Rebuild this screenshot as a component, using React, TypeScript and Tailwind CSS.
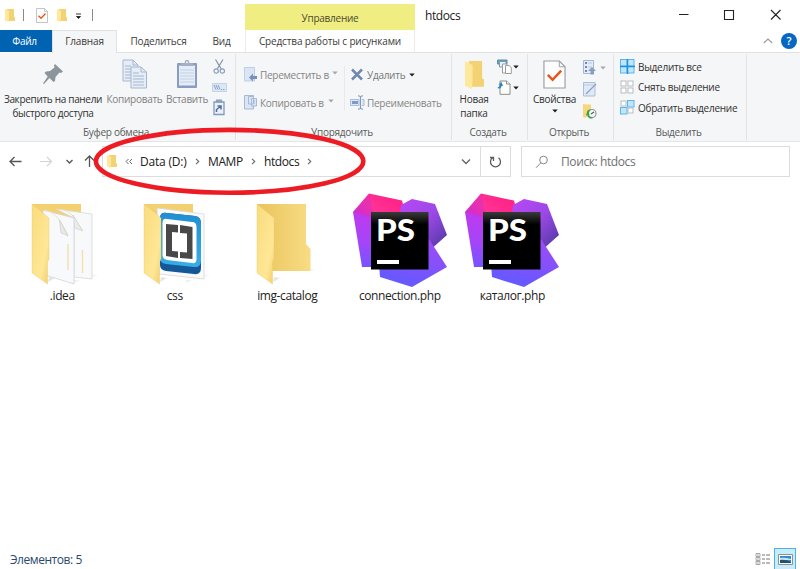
import React from "react";

const sans = "font-['Open_Sans','Noto_Sans',sans-serif]";

function Caret({ dim = false }: { dim?: boolean }) {
  return (
    <svg width="6" height="4" viewBox="0 0 6 4" className="shrink-0">
      <path d="M0.3 .5H5.7L3 3.4Z" fill={dim ? "#a4a8ac" : "#1d1d1d"} />
    </svg>
  );
}

function MiniFolder({ className }: { className: string }) {
  return (
    <svg viewBox="0 0 10 13" preserveAspectRatio="none" className={className}>
      <path d="M2 0H9V8L10 8.600V12H2Z" fill="#f3d273" />
      <path d="M0 0L4 2V9L3.600 13L0 11.500Z" fill="#ffe89c" />
    </svg>
  );
}

function CheckDoc({ className }: { className: string }) {
  return (
    <svg viewBox="0 0 24 30" preserveAspectRatio="none" className={className}>
      <path d="M1 1H17L23 7V29H1Z" fill="#fdfdfd" stroke="#9a9da0" strokeWidth="1.2" />
      <path d="M17 1V7H23" fill="none" stroke="#9a9da0" />
      <path d="M5 15.500L10 20.500L19 11" fill="none" stroke="#e9541c" strokeWidth="2.600" />
    </svg>
  );
}

function TitleBar() {
  return (
    <header className="flex h-[30px] shrink-0 items-start">
      <div className="flex h-[30px] w-[245px] items-center pl-[5px]">
        <MiniFolder className="h-[13px] w-[10px]" />
        <i className="ml-[8px] h-3 w-px bg-[#8b8b8b]" />
        <CheckDoc className="ml-[12px] h-[15px] w-[12px]" />
        <MiniFolder className="ml-[9px] h-[13px] w-[10px]" />
        <svg width="7" height="7" className="ml-[8px] mt-[2px]">
          <path d="M1 1H6M1.500 3.500H5.500L3.500 5.500Z" stroke="#222" fill="#222" strokeWidth=".9" />
        </svg>
        <i className="ml-[10px] h-3 w-px bg-[#8b8b8b]" />
      </div>
      <div className="mt-1 flex h-[26px] w-[170px] items-center justify-center bg-[#f0ee82] text-[10px] leading-[14px] tracking-[-0.25px] text-[#4b4b2c]">
        <span className="mt-px">Управление</span>
      </div>
      <div className="ml-[10px] mt-[7px] text-[12px] leading-[17px] tracking-[-0.4px] text-[#1a1a1a]">htdocs</div>
      <div className="ml-auto flex h-[30px] items-center pr-[19px]">
        <svg width="103" height="12" viewBox="0 0 103 12" fill="none" stroke="#222" strokeWidth="1.1">
          <path d="M1 5.500H10.500M46.500 1.500H55.500V10.500H46.500ZM93 1L102.500 10.500M102.500 1L93 10.500" />
        </svg>
      </div>
    </header>
  );
}

function Tabs() {
  return (
    <nav className="flex h-[23px] shrink-0 text-[10px] leading-[22px] tracking-[-0.15px] text-[#3b3b3b]">
      <div className="h-[22px] w-[52px] bg-[#0063b1] pr-[3px] text-center tracking-[-0.3px] text-white">Файл</div>
      <div className="h-[23px] w-[65px] border-x border-t border-[#e0e1e2] bg-[#f5f6f7] text-center">
        <span className="-mt-px block">Главная</span>
      </div>
      <div className="flex flex-1 border-b border-[#e0e1e2]">
        <div className="w-[83px] text-center">Поделиться</div>
        <div className="w-[43px] text-center">Вид</div>
        <div className="ml-[2px] w-[170px] border-x border-[#ececec] text-center">
          Средства работы с рисунками
        </div>
        <div className="ml-auto flex items-center pr-[3px]">
          <svg width="10" height="6" className="mr-[8px]">
            <path d="M.8 5L5 1L9.200 5" fill="none" stroke="#999" strokeWidth="1.1" />
          </svg>
          <div className="h-4 w-4 rounded-full bg-[#0768c4] text-center text-[11px] font-semibold leading-4 text-white">?</div>
        </div>
      </div>
    </nav>
  );
}

function Group({ width, label, children }: { width: string; label: string; children: React.ReactNode }) {
  return (
    <section className={`flex h-[86px] shrink-0 flex-col border-r border-[#e2e3e4] ${width}`}>
      <div className="flex h-[71px] items-start">{children}</div>
      <div className="pr-[3px] text-center leading-[14px] text-[#5a5a5a]">{label}</div>
    </section>
  );
}

function CopyIcon() {
  return (
    <svg width="26" height="30" viewBox="0 0 26 30" fill="#e6edf7" stroke="#a5b6cf" strokeWidth="1">
      <path d="M1 1H11L16 6V22H1Z" />
      <path d="M11 1V6H16M3 7H9M3 10H12M3 13H12M3 16H12M3 19H12" fill="none" />
      <path d="M9 8H19L24.500 13V29H9Z" />
      <path d="M19 8V13H24.500M11 14H17M11 17H22M11 20H22M11 23H22M11 26H22" fill="none" />
    </svg>
  );
}

function PasteIcon() {
  return (
    <svg width="22" height="30" viewBox="0 0 22 30">
      <rect x="1" y="4" width="20" height="25" rx="1" fill="#8a9cbf" />
      <rect x="3" y="6.500" width="16" height="20" fill="#e4ecf7" />
      <path d="M4 11H18M4 14H18M4 17H18M4 20H18M4 23H18" stroke="#c2d1e7" />
      <path d="M5 7V4H8.500L9.500 1H12.500L13.500 4H17V7Z" fill="#a2b0c8" />
      <circle cx="11" cy="3.200" r="1" fill="#f5f6f7" />
    </svg>
  );
}

function PinIcon() {
  return (
    <svg width="20" height="20" viewBox="0 0 20 20" fill="#8b959d">
      <path d="M12 0L20 7.500L18 9L16.500 8.500L12.500 13L12 17L10.500 18L6.500 14L1 20L0 19.500L4.700 12.500L1.500 9L3 7.500L7 7L11.500 3.500L11 1.500Z" />
    </svg>
  );
}

function SmallPasteIcons() {
  return (
    <svg width="16" height="57" viewBox="0 0 16 57" fill="none" stroke="#8aa0c3" strokeWidth="1.200">
      <path d="M3.500 .5L9.300 10M11 .5L5.200 10" stroke="#8393aa" />
      <circle cx="4.200" cy="12" r="2.200" />
      <circle cx="10.300" cy="12" r="2.200" />
      <path d="M.5 24.500H14.500V32.500H.5Z" fill="#dce7f6" stroke="#c5d3e8" strokeWidth="1" />
      <path d="M2 26L4 30.500M4 26L6 30.500M6 26L8 30.500M9 30.500H10M11 30.500H12.500" strokeWidth="1" />
      <path d="M2 43H12V55.500H2Z" fill="#eaf1fb" stroke="#8499bd" strokeWidth="1.300" />
      <path d="M4.500 43V41.200H9.500V43Z" fill="#8a9dbd" />
      <path d="M4.500 53V50.500L8.500 47.500M5.500 47H9V50.500" stroke="#536e9e" strokeWidth="1.500" />
    </svg>
  );
}

function ClipboardGroup() {
  return (
    <Group width="w-[236px]" label="Буфер обмена">
      <div className="flex w-[106px] flex-col items-center pt-[10px]">
        <PinIcon />
        <div className="mt-[8px] whitespace-nowrap text-center leading-[14px] tracking-[-0.32px]">
          Закрепить на панели
          <br />
          быстрого доступа
        </div>
      </div>
      <div className="flex w-[57px] flex-col items-center pt-[5px] text-[#808080]">
        <CopyIcon />
        <span className="mt-[3px] leading-[14px]">Копировать</span>
      </div>
      <div className="flex w-[48px] flex-col items-center pt-[5px] text-[#808080]">
        <PasteIcon />
        <span className="mt-[3px] leading-[14px]">Вставить</span>
      </div>
      <div className="ml-px pt-[5px]">
        <SmallPasteIcons />
      </div>
    </Group>
  );
}

function OrganizeGroup() {
  return (
    <Group width="w-[216px]" label="Упорядочить">
      <div className="flex h-[71px] w-[108px] flex-col whitespace-nowrap pl-[8px] pt-[13px] text-[#858585]">
        <div className="flex h-[15px] items-center">
          <svg width="15" height="15" viewBox="0 0 15 15" className="shrink-0">
            <path d="M.5.5H10.500V14H.5Z" fill="#dae5f5" stroke="#bfcee5" />
            <path d="M13 9H9V6.500L5 10.500L9 14.500V12H13Z" fill="#7890b9" />
          </svg>
          <span className="ml-px w-[69px]">Переместить в</span>
          <span className="-mt-[3px] ml-[3px] flex"><Caret dim /></span>
        </div>
        <div className="mt-[13px] flex h-[15px] items-center">
          <svg width="15" height="15" viewBox="0 0 15 15" fill="#dae5f5" stroke="#a6b9d7" className="shrink-0">
            <path d="M.5.5H9.500V14H.5Z" />
            <path d="M4.500 1.500H9.500V9H4.500ZM7.500 3.500H12.500V11H7.500Z" />
            <path d="M9 6H11M9 8H11" />
          </svg>
          <span className="ml-px w-[65px]">Копировать в</span>
          <span className="-mt-[3px] ml-[3px] flex"><Caret dim /></span>
        </div>
      </div>
      <div className="mt-[12px] h-[44px] w-px bg-[#e8e9ea]" />
      <div className="flex flex-col pl-[5px] pt-[13px] text-[#777]">
        <div className="flex h-[15px] items-center">
          <svg width="14" height="13" viewBox="0 0 14 13">
            <path d="M2 1.500L12 11.500M12 1.500L2 11.500" stroke="#7187ad" strokeWidth="2.500" />
          </svg>
          <span className="ml-[3px]">Удалить</span>
          <span className="ml-[4px] flex"><Caret /></span>
        </div>
        <div className="mt-[13px] flex h-[15px] items-center text-[#858585]">
          <svg width="15" height="15" viewBox="0 0 15 15" fill="none" stroke="#819abf">
            <path d="M.5 4.500H9V10.500H.5ZM12 4.500H14V10.500H12" fill="#dce7f7" stroke="#aabdda" />
            <path d="M2 7.500H8" strokeWidth="3" />
            <path d="M8 .8C10 .8 10.500 1 10.500 3V12C10.500 14 10 14.200 8 14.200M13 .8C11 .8 10.500 1 10.500 3M13 14.200C11 14.200 10.500 14 10.500 12" strokeWidth="1.200" />
          </svg>
          <span className="ml-[2px]">Переименовать</span>
        </div>
      </div>
    </Group>
  );
}

function CreateGroup() {
  return (
    <Group width="w-[76px]" label="Создать">
      <div className="flex w-[44px] flex-col items-center pt-[7px]">
        <MiniFolder className="h-[28px] w-[19px]" />
        <div className="mt-[3px] text-center leading-[14px]">Новая<br />папка</div>
      </div>
      <div className="ml-px flex flex-col gap-[6px] pt-[5px]">
        <div className="flex items-center gap-px">
          <svg width="15" height="15" viewBox="0 0 15 15" fill="#fff" stroke="#9a9da0">
            <path d="M.5 1H10V5H.5Z" fill="#58a7dc" stroke="#67899b" />
            <path d="M2.500 2.500H9V8H2.500Z" fill="#e4f3fa" stroke="#769cad" />
            <path d="M5.500 5H10V14H5.500Z" />
            <path d="M8.500 6.500H12L14.300 8.500V14.500H8.500Z" />
          </svg>
          <Caret />
        </div>
        <div className="flex items-center gap-px">
          <svg width="15" height="15" viewBox="0 0 15 15" fill="#fff" stroke="#8a8d90">
            <path d="M3 1H9.500L13 4V14.300H3Z" />
            <path d="M9.500 1V4H13" />
            <path d="M0 8C2 7 3 6 2.500 4.500H1.500L4.500 2L6 6H4.500C4.500 8 3 9 0 8Z" fill="#3286c0" stroke="none" />
          </svg>
          <Caret />
        </div>
      </div>
    </Group>
  );
}

function OpenGroup() {
  return (
    <Group width="w-[86px]" label="Открыть">
      <div className="flex w-[53px] flex-col items-center pt-[6px]">
        <CheckDoc className="h-[29px] w-[23px]" />
        <span className="mt-[3px] leading-[14px]">Свойства</span>
        <span className="mt-[3px] flex"><Caret /></span>
      </div>
      <div className="ml-[2px] flex flex-col gap-[7px] pt-[6px]">
        <div className="flex items-center gap-[3px]">
          <svg width="14" height="15" viewBox="0 0 14 15">
            <path d="M.5.5H10.500V13.500H.5Z" fill="#e4ecf7" stroke="#a7b7ce" />
            <path d="M2 3H4M2 7H4M2 11H4" stroke="#6f89b3" strokeWidth="2" />
            <path d="M5 3H9M5 7H9" stroke="#b8c8df" />
            <path d="M9 7L13 11H11V14.500H7.500V11H5Z" fill="#899dbf" />
          </svg>
          <Caret dim />
        </div>
        <svg width="14" height="15" viewBox="0 0 14 15">
          <path d="M.5.5H12V14H.5Z" fill="#e0eaf7" stroke="#adbfd8" />
          <path d="M1 3H11" stroke="#b9cae3" />
          <path d="M3 12L11 4L13 2" stroke="#8ea3c4" strokeWidth="1.300" />
        </svg>
        <svg width="15" height="15" viewBox="0 0 15 15">
          <path d="M0 0L3 .5H8V13H3L2.500 14L0 13Z" fill="#f8d679" />
          <circle cx="9" cy="9.500" r="4" fill="#f3f7f4" stroke="#929899" strokeWidth="1.200" />
          <path d="M8 10L11 8" fill="none" stroke="#4e5c55" strokeWidth="1.200" />
          <path d="M4.500 6.500L3 11.500L7 10.500L6 10C6 8 6.500 6.500 8 5.500C6.500 5.500 5.500 6 4.500 6.500Z" fill="#31a648" />
          <path d="M5 11C5.500 13 7.500 14.200 9.500 13.800" fill="none" stroke="#31a648" strokeWidth="1.300" />
        </svg>
      </div>
    </Group>
  );
}

function SelectIcon({ active }: { active: boolean[] }) {
  const cells = [
    [0.5, 0.5],
    [7.5, 0.5],
    [0.5, 7.5],
    [7.5, 7.5],
  ];
  const all = active.every(Boolean);
  return (
    <svg width="15" height="15" viewBox="0 0 15 15" className="shrink-0">
      {cells.map(([x, y], index) =>
        active[index] ? (
          <rect key={index} x={x} y={y} width="6.5" height="6.5" fill="#bfe6fc" stroke="#5cb6ee" />
        ) : (
          <rect key={index} x={x + 0.500} y={y + 0.500} width="5" height="5" fill="#fff" stroke="#b9bbbd" />
        ),
      )}
      {all && <path d="M7.500 0V15M0 7.500H15" stroke="#1e90e0" strokeWidth="1.500" />}
    </svg>
  );
}

function SelectGroup() {
  const rows = [
    { text: "Выделить все", active: [true, true, true, true] },
    { text: "Снять выделение", active: [false, false, false, false] },
    { text: "Обратить выделение", active: [false, true, true, false] },
  ];
  return (
    <Group width="w-[133px]" label="Выделить">
      <div className="flex flex-col gap-[5.500px] pl-[6px] pt-[5px]">
        {rows.map((row) => (
          <div key={row.text} className="flex h-[15px] items-center gap-[3px] whitespace-nowrap">
            <SelectIcon active={row.active} />
            <span>{row.text}</span>
          </div>
        ))}
      </div>
    </Group>
  );
}

function AddressRow() {
  return (
    <div className="flex h-[40px] shrink-0 items-start pt-[4px]">
      <div className="flex h-[31px] w-[102px] items-center pl-[9px]">
        <svg width="88" height="15" viewBox="0 0 88 15" fill="none">
          <path d="M12.500 7.500H1M5.500 3L1 7.500L5.500 12" stroke="#555" strokeWidth="1.300" />
          <path d="M31 7.500H42M38 3L42.500 7.500L38 12" stroke="#d3d3d3" strokeWidth="1.200" />
          <path d="M57.500 6L60.500 9L63.500 6" stroke="#555" strokeWidth="1.300" />
          <path d="M80.500 13V2M76 6.500L80.500 2L85 6.500" stroke="#555" strokeWidth="1.300" />
        </svg>
      </div>
      <div className="flex h-[31px] w-[409px] border border-[#dcdcdc] text-[12px] leading-[28px] text-[#202020]">
        <div className="flex w-[377px] items-center pl-[4px]">
          <MiniFolder className="h-[13px] w-[10px]" />
          <svg width="8" height="7" className="ml-[8px]" fill="none" stroke="#666">
            <path d="M3.500 1L1 3.500L3.500 6M7 1L4.500 3.500L7 6" />
          </svg>
          <span className="ml-[7px] w-[49px] whitespace-nowrap tracking-[-0.2px]">Data (D:)</span>
          <Chevron className="ml-[6px]" />
          <span className="ml-[8px] w-[36px] tracking-[-0.4px]">MAMP</span>
          <Chevron className="ml-[7px]" />
          <span className="ml-[8px] w-[36px] tracking-[-0.4px]">htdocs</span>
          <Chevron className="ml-[7px]" />
          <svg width="10" height="7" className="ml-auto mr-[9px]">
            <path d="M1 1.500L5 5.500L9 1.500" fill="none" stroke="#666" strokeWidth="1.400" />
          </svg>
        </div>
        <div className="flex flex-1 items-center justify-center border-l border-[#dcdcdc]">
          <svg width="13" height="13" viewBox="0 0 13 13" fill="none" stroke="#5c5c5c" strokeWidth="1.300">
            <path d="M3.500 2.800A5 5 0 1 0 9.500 2.800M1 2.500H4.500V6" />
          </svg>
        </div>
      </div>
      <div className="ml-[10px] flex h-[31px] w-[269px] items-center border border-[#dcdcdc] pl-[13px] text-[12px] text-[#707070]">
        <svg width="14" height="14" viewBox="0 0 14 14" fill="none" stroke="#858585">
          <circle cx="8.500" cy="5" r="3.800" />
          <path d="M5.800 7.800L1 12.800" />
        </svg>
        <span className="ml-[12px] tracking-[-0.4px]">Поиск: htdocs</span>
      </div>
    </div>
  );
}

function Chevron({ className }: { className: string }) {
  return (
    <svg width="5" height="7" className={`shrink-0 ${className}`}>
      <path d="M1 .8L3.800 3.500L1 6.200" fill="none" stroke="#666" strokeWidth="1.100" />
    </svg>
  );
}

function FolderArt({ kind }: { kind: "pages" | "brackets" | "empty" }) {
  return (
    <svg width="72" height="88" viewBox="0 0 72 88">
      <defs>
        <linearGradient id={`back-${kind}`}>
          <stop offset="0" stopColor="#e9c45c" />
          <stop offset="1" stopColor="#f8dc84" />
        </linearGradient>
        <linearGradient id={`front-${kind}`} x1="0" y1="0" x2="1" y2="1">
          <stop offset="0" stopColor="#f9db7c" />
          <stop offset=".7" stopColor="#ffe797" />
          <stop offset="1" stopColor="#f1cc66" />
        </linearGradient>
        <linearGradient id={`shade-${kind}`}>
          <stop offset="0" stopColor="#e4e4e4" />
          <stop offset="1" stopColor="#f8f8f8" />
        </linearGradient>
        <linearGradient id="brackets-blue" x1="0" y1="0" x2="0" y2="1">
          <stop offset="0" stopColor="#1f8ed2" />
          <stop offset="1" stopColor="#38aee7" />
        </linearGradient>
      </defs>
      {kind === "empty" ? (
        <path d="M21 84L28 80L22 79ZM54 73L59 70L63 73Z" fill={`url(#shade-${kind})`} />
      ) : (
        <path d="M21 84L28 80L22 79ZM47 85L53 82H47ZM65 80L71 77L65 76Z" fill={`url(#shade-${kind})`} />
      )}
      <path d="M5 6H54V46L58.500 51V73H5Z" fill={`url(#back-${kind})`} />
      {kind !== "empty" && <path d="M5 6H54V16H5Z" fill="#f3d070" />}
      {kind === "pages" && (
        <>
          <path d="M29 11L65 16V81L47 79V20Z" fill="#f8f9fb" stroke="#d5d7d9" strokeWidth=".8" />
          <path d="M31 11.500C38 11 42 14 46 18C48 21 52 27 55.500 32" fill="none" stroke="#f1e2b5" strokeWidth="1" />
          <path d="M46 17L47.500 30Q51 31 55.500 33Z" fill="#ececec" stroke="#c9c9c9" strokeWidth=".6" />
          <path d="M55.500 52V75" stroke="#f3dfa6" strokeWidth="1.300" />
          <path d="M16 12L47 20V86L15 76Z" fill="#f7f9fc" stroke="#d2d4d7" strokeWidth=".8" />
          <path d="M18 12.500C25 13 29 18 33 23C36 28 38 32 41 37" fill="none" stroke="#f1e2b5" strokeWidth="1" />
          <path d="M32.500 22L34 35Q37 36 41 38Z" fill="#e9e9e9" stroke="#c5c5c5" strokeWidth=".6" />
          <path d="M41 46V72" stroke="#f3dfa6" strokeWidth="1.300" />
        </>
      )}
      {kind === "brackets" && (
        <>
          <path d="M18 10L65 16V81L20 76Z" fill="#fafafa" stroke="#d7d7d7" strokeWidth=".8" />
          <path d="M21 20Q21 14 28 15L56 18Q62 19 62 25V70Q62 77 55 76L27 73Q21 72 21 67Z" fill="#155898" />
          <path d="M21 20Q21 14 28 15L56 18Q62 19 62 25V62Q62 70 55 69L27 66Q21 65 21 60Z" fill="url(#brackets-blue)" />
          <path d="M23.500 25Q23.500 20 28 21L53 24Q57.500 24 57.500 29V61Q57.500 66 53 65L28 62Q23.500 61 23.500 57Z" fill="#fff" />
          <path d="M27 26L39 27V34.500L33 34V53L39 53.500V60L27 58ZM41 27L53.500 29V61L41 60V54L48 54.500V35.500L41 35Z" fill="#484848" />
        </>
      )}
      <path d="M5 6L22 20V61L20.500 64V86L5 75Z" fill={`url(#front-${kind})`} stroke="#ecc968" strokeWidth=".4" />
    </svg>
  );
}

function StormArt({ id }: { id: string }) {
  return (
    <svg width="96" height="96" viewBox="0 0 96 96">
      <defs>
        <linearGradient id={`${id}-left`} x1="0" y1="0" x2="0" y2="1">
          <stop offset="0" stopColor="#bf39ed" />
          <stop offset=".5" stopColor="#a844f7" />
          <stop offset="1" stopColor="#7654ff" />
        </linearGradient>
        <linearGradient id={`${id}-pink`} x1="0" y1=".8" x2=".7" y2=".1">
          <stop offset="0" stopColor="#b82cea" />
          <stop offset=".6" stopColor="#ff3394" />
          <stop offset="1" stopColor="#ff2588" />
        </linearGradient>
        <linearGradient id={`${id}-right`} x1="0" y1="0" x2="1" y2="1">
          <stop offset="0" stopColor="#bd47f5" />
          <stop offset=".5" stopColor="#9c48e8" />
          <stop offset="1" stopColor="#453797" />
        </linearGradient>
        <linearGradient id={`${id}-low`} x1="1" y1="0" x2=".6" y2="1">
          <stop offset="0" stopColor="#a948f5" />
          <stop offset="1" stopColor="#6758ff" />
        </linearGradient>
        <linearGradient id={`${id}-black`} x1="0" y1="0" x2="0" y2="1">
          <stop offset="0" stopColor="#3b3b3b" />
          <stop offset=".22" stopColor="#000" />
        </linearGradient>
      </defs>
      <path d="M1 20L17 1.500L50 8.500L54 23L19 45Z" fill={`url(#${id}-pink)`} />
      <path d="M1 20L19 24V75H10Z" fill={`url(#${id}-left)`} />
      <path d="M1 20L17 2L21 20V26Z" fill="#c42be0" fillOpacity=".35" />
      <path d="M49 13L60 7L83 12L95 43L77 59L45 44Z" fill={`url(#${id}-right)`} />
      <path d="M75 44L95 75L60 95L28 85L27 72Z" fill={`url(#${id}-low)`} />
      <rect x="19" y="20" width="57.500" height="57.500" fill={`url(#${id}-black)`} />
      <text x="24" y="49" textLength="39" lengthAdjust="spacingAndGlyphs" fill="#fff" fontFamily="Lato, sans-serif" fontWeight="900" fontSize="30">PS</text>
      <rect x="25" y="68" width="22" height="4" fill="#fff" />
    </svg>
  );
}

function FileItem({ name, children }: { name: string; children: React.ReactNode }) {
  return (
    <div className="flex w-[112.500px] flex-col items-center">
      <div className="flex h-[96px] items-start justify-center">{children}</div>
      <div className="text-[12px] leading-[16px] tracking-[-0.4px] text-[#222]">{name}</div>
    </div>
  );
}

function Files() {
  return (
    <main className="flex flex-1 items-start pl-[6px] pt-[10px]">
      <FileItem name=".idea"><span className="ml-px mt-[6px]"><FolderArt kind="pages" /></span></FileItem>
      <FileItem name="css"><span className="ml-px mt-[6px]"><FolderArt kind="brackets" /></span></FileItem>
      <FileItem name="img-catalog"><span className="ml-px mt-[6px]"><FolderArt kind="empty" /></span></FileItem>
      <FileItem name="connection.php"><StormArt id="connection" /></FileItem>
      <FileItem name="каталог.php"><StormArt id="catalog" /></FileItem>
    </main>
  );
}

function StatusBar() {
  return (
    <footer className="flex h-[22px] shrink-0 items-center pl-[10px] pr-[4px] text-[12px] tracking-[-0.45px] text-[#29496d]">
      <span className="mt-[3px]">Элементов: 5</span>
      <div className="ml-auto flex items-center">
        <svg width="16" height="14" viewBox="0 0 16 14" fill="#f7f7f7" stroke="#aaa" className="mt-[2px]">
          <path d="M1 1.500H5V4.500H1ZM1 5.500H5V8.500H1ZM1 9.500H5V12.500H1Z" />
          <path d="M7 3H10M11 3H15M7 7H10M11 7H15M7 11H10M11 11H15" stroke="#777" />
          <path d="M2.500 3H3.500" stroke="#3495ce" />
          <path d="M2.500 7H3.500" stroke="#799349" />
          <path d="M2.500 11H3.500" stroke="#cc4e40" />
        </svg>
        <div className="ml-[3px] mt-px flex h-[22px] w-[22px] items-center justify-center border border-[#48b5e9] bg-[#c8ecfb]">
          <svg width="15" height="11" viewBox="0 0 15 11" className="mt-px">
            <path d="M.5.5H14.500V10.500H.5Z" fill="#fff" stroke="#8c9194" />
            <path d="M2 2H13V9H2Z" fill="#3689ce" />
            <path d="M2 4Q6 3 13 5V6L2 6Z" fill="#c4e7f7" />
            <path d="M2 6Q7 5 13 8V9H2Z" fill="#245268" />
          </svg>
        </div>
      </div>
    </footer>
  );
}

export default function App() {
  return (
    <div className={`relative flex h-[569px] w-[800px] flex-col overflow-hidden bg-white text-[10px] ${sans}`}>
      <TitleBar />
      <Tabs />
      <div className="flex h-[89px] shrink-0 border-b border-[#e4e5e6] bg-[#f5f6f7] pt-px leading-[14px] tracking-[-0.27px] text-[#303030]">
        <ClipboardGroup />
        <OrganizeGroup />
        <CreateGroup />
        <OpenGroup />
        <SelectGroup />
      </div>
      <AddressRow />
      <Files />
      <StatusBar />
      <svg width="277" height="73" className="pointer-events-none absolute left-[91px] top-[125px]">
        <ellipse cx="138.600" cy="36.300" rx="133.700" ry="31.400" fill="none" stroke="#ed1c24" strokeWidth="4.600" />
      </svg>
    </div>
  );
}
